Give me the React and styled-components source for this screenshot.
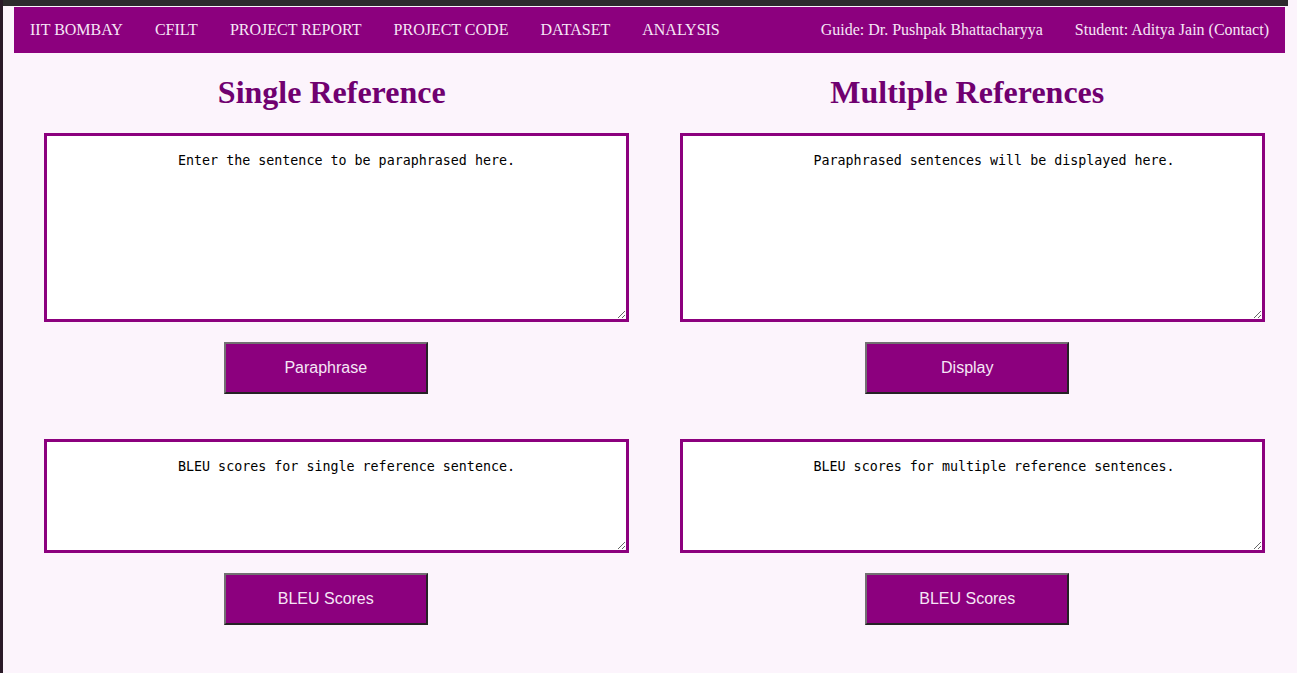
import * as React from "react";
import styled, { createGlobalStyle } from "styled-components";

const PURPLE = "#8c007e";

const Global = createGlobalStyle`
  html, body {
    margin: 0;
    padding: 0;
    background: #fcf4fc;
  }
`;

export default function App() {
  return (
    <>
      <Global />
      <Page>
        <TopEdge />
        <NavBar>
          <NavGroup>
            <NavLink>IIT BOMBAY</NavLink>
            <NavLink>CFILT</NavLink>
            <NavLink>PROJECT REPORT</NavLink>
            <NavLink>PROJECT CODE</NavLink>
            <NavLink>DATASET</NavLink>
            <NavLink>ANALYSIS</NavLink>
          </NavGroup>
          <NavGroup>
            <NavLink>Guide: Dr. Pushpak Bhattacharyya</NavLink>
            <NavLink>Student: Aditya Jain (Contact)</NavLink>
          </NavGroup>
        </NavBar>

        <Columns>
          <Column>
            <Title>Single Reference</Title>
            <TextBox $height={189} placeholder="Enter the sentence to be paraphrased here." />
            <ButtonRow $shift={12}>
              <Button>Paraphrase</Button>
            </ButtonRow>
            <TextBox $height={114} $gap={45} placeholder="BLEU scores for single reference sentence." />
            <ButtonRow $shift={12}>
              <Button>BLEU Scores</Button>
            </ButtonRow>
          </Column>
          <Column>
            <Title>Multiple References</Title>
            <TextBox $height={189} placeholder="Paraphrased sentences will be displayed here." />
            <ButtonRow>
              <Button>Display</Button>
            </ButtonRow>
            <TextBox $height={114} $gap={45} placeholder="BLEU scores for multiple reference sentences." />
            <ButtonRow>
              <Button>BLEU Scores</Button>
            </ButtonRow>
          </Column>
        </Columns>
      </Page>
    </>
  );
}

const Page = styled.div`
  min-height: 100vh;
  box-sizing: border-box;
  border-left: 3px solid #2a1a28;
  padding: 0 12px 0 11px;
`;

const TopEdge = styled.div`
  height: 6px;
  margin: 0 -3px 0 -11px;
  background: #2d2b2d;
`;

const NavBar = styled.nav`
  margin-top: 1px;
  height: 46px;
  background: ${PURPLE};
  display: flex;
  justify-content: space-between;
  align-items: center;
`;

const NavGroup = styled.div`
  display: flex;
  align-items: center;
`;

const NavLink = styled.a`
  padding: 0 16px;
  font-family: "Liberation Serif", serif;
  font-size: 16px;
  color: #f6e6f6;
  white-space: nowrap;
  cursor: pointer;
`;

const Columns = styled.div`
  display: grid;
  grid-template-columns: 1fr 1fr;
`;

const Column = styled.section`
  display: flex;
  flex-direction: column;
`;

const Title = styled.h1`
  margin: 21px 0 22px;
  font-family: "Liberation Serif", serif;
  font-size: 32px;
  line-height: 37px;
  font-weight: bold;
  text-align: center;
  color: #700070;
`;

const TextBox = styled.textarea`
  display: block;
  box-sizing: border-box;
  margin: ${(p) => p.$gap || 0}px 0 0 30px;
  width: 585px;
  height: ${(p) => p.$height}px;
  padding: 17px 20px 10px 131px;
  border: 3px solid ${PURPLE};
  background: #fff;
  font-family: "DejaVu Sans Mono", monospace;
  font-size: 13.333px;
  color: #000;
  outline: none;

  &::placeholder {
    color: #000;
    opacity: 1;
  }
`;

const ButtonRow = styled.div`
  margin-top: 20px;
  display: flex;
  justify-content: center;
  padding-right: ${(p) => p.$shift || 0}px;
`;

const Button = styled.button`
  box-sizing: border-box;
  width: 204px;
  height: 52px;
  background: ${PURPLE};
  border: 2px solid;
  border-color: #727072 #262226 #262226 #727072;
  color: #f6e6f6;
  font-family: "Liberation Sans", Arial, sans-serif;
  font-size: 16px;
  cursor: pointer;
`;
